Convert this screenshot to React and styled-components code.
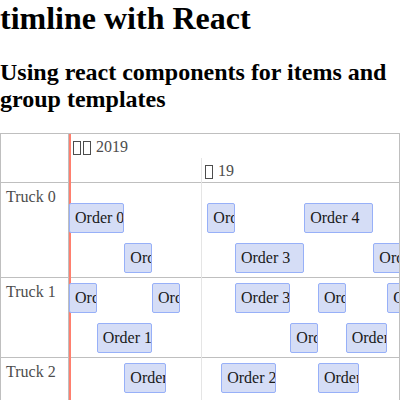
import React from 'react';
import styled, { createGlobalStyle } from 'styled-components';

const GlobalStyle = createGlobalStyle`
  body {
    margin: 0;
    background: #fff;
    color: #000;
    font-family: "Liberation Serif", serif;
    font-size: 16px;
    line-height: 18px;
  }
`;

const Page = styled.main`
  height: 100vh;
  overflow: hidden;
`;

const Title = styled.h1`
  margin: 0 0 22px;
  font-size: 32px;
  line-height: 37px;
`;

const Subtitle = styled.h2`
  margin: 0 0 20px;
  font-size: 24px;
  line-height: 27px;
`;

const TimelineFrame = styled.section`
  position: relative;
  border: 1px solid #bfbfbf;
  color: #4d4d4d;
  overflow: hidden;
`;

const Row = styled.div`
  display: grid;
  grid-template-columns: 68px 1fr;
  border-bottom: 1px solid #bfbfbf;
`;

const LabelCell = styled.div`
  padding: 5px;
  border-right: 1px solid #bfbfbf;
`;

const Axis = styled.div`
  display: grid;
  grid-template-rows: 24px 24px;
`;

const AxisLabel = styled.div`
  display: flex;
  align-items: center;
  gap: 2px;
  padding: 4px 3px 2px 4px;
  margin-left: ${({ $start }) => $start};
`;

const EmptyGlyph = styled.span`
  box-sizing: border-box;
  width: 8px;
  height: 14px;
  margin-top: 2px;
  border: 1px solid #4d4d4d;
`;

const AxisNumber = styled.span`
  margin-left: 3px;
`;

const Lanes = styled.div`
  display: grid;
  grid-template-columns: repeat(24, minmax(0, 1fr));
  grid-template-rows: 30px 30px;
  row-gap: 10px;
  padding: ${({ $top }) => $top} 0 4px;
  margin-right: -2px;
`;

const Item = styled.div`
  grid-column: ${({ $start }) => $start + 1} / span ${({ $span }) => $span};
  grid-row: ${({ $lane }) => $lane};
  z-index: 1;
  box-sizing: border-box;
  padding: 5px;
  border: 1px solid #97b0f8;
  border-radius: 2px;
  background: #d5ddf6;
  color: #1a1a1a;
  white-space: nowrap;
  overflow: hidden;
`;

const Markers = styled.div`
  position: absolute;
  inset: 0 0 0 68px;
  pointer-events: none;
`;

const CurrentTime = styled.div`
  position: absolute;
  top: 0;
  bottom: 0;
  left: 0;
  width: 2px;
  background: #ff7f6e;
`;

const DayLine = styled.div`
  position: absolute;
  top: 24px;
  bottom: 0;
  left: 40%;
  width: 1px;
  background: #e5e5e5;
`;

const groups = [
  {
    name: 'Truck 0',
    top: '20px',
    items: [
      { order: 0, start: 0, span: 4, lane: 1 },
      { order: 1, start: 4, span: 2, lane: 2 },
      { order: 2, start: 10, span: 2, lane: 1 },
      { order: 3, start: 12, span: 5, lane: 2 },
      { order: 4, start: 17, span: 5, lane: 1 },
      { order: 5, start: 22, span: 3, lane: 2 },
    ],
  },
  {
    name: 'Truck 1',
    top: '5px',
    items: [
      { order: 0, start: 0, span: 2, lane: 1 },
      { order: 1, start: 2, span: 4, lane: 2 },
      { order: 2, start: 6, span: 2, lane: 1 },
      { order: 3, start: 12, span: 4, lane: 1 },
      { order: 4, start: 16, span: 2, lane: 2 },
      { order: 5, start: 18, span: 2, lane: 1 },
      { order: 6, start: 20, span: 3, lane: 2 },
      { order: 7, start: 23, span: 2, lane: 1 },
    ],
  },
  {
    name: 'Truck 2',
    top: '5px',
    items: [
      { order: 1, start: 4, span: 3, lane: 1 },
      { order: 2, start: 11, span: 4, lane: 1 },
      { order: 3, start: 18, span: 3, lane: 1 },
    ],
  },
];

export default function App() {
  return (
    <>
      <GlobalStyle />
      <Page>
        <Title>timline with React</Title>
        <Subtitle>Using react components for items and group templates</Subtitle>
        <TimelineFrame aria-label="Truck orders">
          <Markers>
            <DayLine />
            <CurrentTime />
          </Markers>
          <Row>
            <LabelCell />
            <Axis>
              <AxisLabel $start="0">
                <EmptyGlyph />
                <EmptyGlyph />
                <AxisNumber>2019</AxisNumber>
              </AxisLabel>
              <AxisLabel $start="40%">
                <EmptyGlyph />
                <AxisNumber>19</AxisNumber>
              </AxisLabel>
            </Axis>
          </Row>
          {groups.map((group) => (
            <Row key={group.name}>
              <LabelCell>{group.name}</LabelCell>
              <Lanes $top={group.top}>
                {group.items.map((item) => (
                  <Item
                    key={item.order}
                    $start={item.start}
                    $span={item.span}
                    $lane={item.lane}
                  >
                    Order {item.order}
                  </Item>
                ))}
              </Lanes>
            </Row>
          ))}
        </TimelineFrame>
      </Page>
    </>
  );
}
